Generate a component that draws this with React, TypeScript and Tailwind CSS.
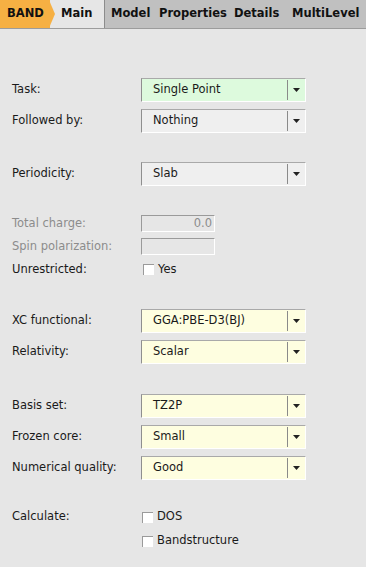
import React from "react";

const font = { fontFamily: '"DejaVu Sans", Verdana, sans-serif' };

function Select({ value, bg }: { value: string; bg: string }) {
  return (
    <div
      className={`flex h-[24px] w-[165px] items-stretch border-t border-l border-t-[#a9a9a9] border-l-[#8f8f8f] border-b border-r border-b-white border-r-white ${bg}`}
    >
      <div className="flex flex-1 items-center pl-[11px] text-[11.5px] text-[#1a1a1a]">{value}</div>
      <div className="my-[1px] w-px bg-[#8a8a8a]" />
      <div className="flex w-[17px] items-center justify-center">
        <svg width="7" height="4" viewBox="0 0 7 4">
          <polygon points="0,0 7,0 3.5,4" fill="#222" />
        </svg>
      </div>
    </div>
  );
}

function Checkbox() {
  return <div className="h-[11px] w-[11px] border-t border-l border-t-[#9a9a9a] border-l-[#9a9a9a] bg-white" />;
}

function Row({ label, children, muted, h = "h-[24px]" }: { label: string; children?: React.ReactNode; muted?: boolean; h?: string }) {
  return (
    <div className={`flex ${h} items-center`}>
      <div className={`w-[129px] text-[11.5px] ${muted ? "text-[#8c8c8c]" : "text-[#1a1a1a]"}`}>{label}</div>
      {children}
    </div>
  );
}

export default function App() {
  return (
    <div className="h-[567px] w-[366px] overflow-hidden bg-[#e6e6e6]" style={font}>
      <div className="flex h-[29px] border-b border-[#9c9c9c] bg-[#c0c0c0] text-[11.5px] font-bold text-[#111]">
        <div className="relative flex w-[50px] items-center bg-[#f6b043] pl-[7px]">
          BAND
          <svg className="absolute left-[49px] top-0" width="7" height="28" viewBox="0 0 7 28">
            <polygon points="0,0 0,28 6,14" fill="#f6b043" />
          </svg>
        </div>
        <div className="flex w-[55px] items-center border-r border-[#8c8c8c] bg-[#e6e6e6] pl-[11px]">Main</div>
        <div className="flex w-[54px] items-center pl-[6px]">Model</div>
        <div className="flex w-[75px] items-center">Properties</div>
        <div className="flex w-[58px] items-center">Details</div>
        <div className="flex items-center">MultiLevel</div>
      </div>

      <div className="flex flex-col pl-[12px] pt-[49px]">
        <Row label="Task:">
          <Select value="Single Point" bg="bg-[#ddfadd]" />
        </Row>
        <div className="h-[7px]" />
        <Row label="Followed by:">
          <Select value="Nothing" bg="bg-[#efefef]" />
        </Row>
        <div className="h-[29px]" />
        <Row label="Periodicity:">
          <Select value="Slab" bg="bg-[#efefef]" />
        </Row>
        <div className="h-[26px]" />
        <Row label="Total charge:" muted h="h-[23px]">
          <div className="flex h-[17px] w-[74px] items-center justify-end border-t border-l border-t-[#9a9a9a] border-l-[#9a9a9a] border-b border-r border-b-white border-r-white pr-[2px] text-[11.5px] text-[#8c8c8c]">
            0.0
          </div>
        </Row>
        <Row label="Spin polarization:" muted h="h-[23px]">
          <div className="h-[17px] w-[74px] border-t border-l border-t-[#9a9a9a] border-l-[#9a9a9a] border-b border-r border-b-white border-r-white" />
        </Row>
        <Row label="Unrestricted:" h="h-[23px]">
          <div className="flex items-center gap-[4px] pl-[2px] text-[11.5px] text-[#1a1a1a]">
            <Checkbox />
            Yes
          </div>
        </Row>
        <div className="h-[28px]" />
        <Row label="XC functional:">
          <Select value="GGA:PBE-D3(BJ)" bg="bg-[#fefee0]" />
        </Row>
        <div className="h-[7px]" />
        <Row label="Relativity:">
          <Select value="Scalar" bg="bg-[#fefee0]" />
        </Row>
        <div className="h-[30px]" />
        <Row label="Basis set:">
          <Select value="TZ2P" bg="bg-[#fefee0]" />
        </Row>
        <div className="h-[7px]" />
        <Row label="Frozen core:">
          <Select value="Small" bg="bg-[#fefee0]" />
        </Row>
        <div className="h-[7px]" />
        <Row label="Numerical quality:">
          <Select value="Good" bg="bg-[#fefee0]" />
        </Row>
        <div className="h-[25px]" />
        <Row label="Calculate:">
          <div className="flex items-center gap-[4px] pl-[1px] text-[11.5px] text-[#1a1a1a]">
            <Checkbox />
            DOS
          </div>
        </Row>
        <Row label="">
          <div className="flex items-center gap-[4px] pl-[1px] text-[11.5px] text-[#1a1a1a]">
            <Checkbox />
            Bandstructure
          </div>
        </Row>
      </div>
    </div>
  );
}
